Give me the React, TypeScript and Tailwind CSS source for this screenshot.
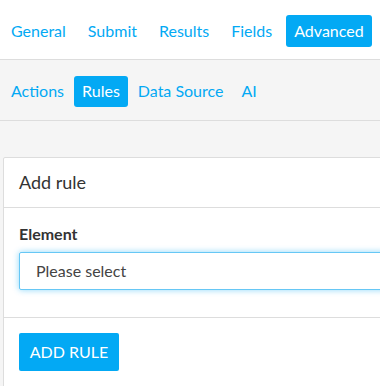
import React from "react";

export default function App() {
  const top = ["General", "Submit", "Results", "Fields", "Advanced"];
  const sub = ["Actions", "Rules", "Data Source", "AI"];
  return (
    <div
      className="w-[380px] h-[386px] overflow-hidden bg-[#f5f5f5]"
      style={{ fontFamily: "Lato, 'Noto Sans', sans-serif" }}
    >
      <div className="h-[60px] bg-white border-b border-[#dddddd] pl-[3px] pt-[15px] flex gap-[6px]">
        {top.map((t) => (
          <div
            key={t}
            className={
              "px-2 h-[32px] leading-[31px] rounded-[3px] text-[16px] whitespace-nowrap " +
              (t === "Advanced" ? "bg-[#03a9f4] text-white" : "text-[#03a9f4]")
            }
          >
            {t}
          </div>
        ))}
      </div>
      <div className="h-[61px] border-b border-[#dddddd] pl-[3px] pt-[16px] flex gap-[2px]">
        {sub.map((t) => (
          <div
            key={t}
            className={
              "px-2 h-[31px] leading-[30px] rounded-[3px] text-[16px] whitespace-nowrap " +
              (t === "Rules" ? "bg-[#03a9f4] text-white" : "text-[#03a9f4]")
            }
          >
            {t}
          </div>
        ))}
      </div>
      <div className="mt-[36px] ml-[3px] w-[400px] bg-white border border-[#dddddd] rounded-[2px]">
        <div className="h-[50px] border-b border-[#dddddd] px-[15px] flex items-center text-[18px] text-[#333333]">
          Add rule
        </div>
        <div className="px-[15px] pt-[15px] pb-[27px] border-b border-[#dddddd]">
          <div className="text-[16px] leading-[22px] font-bold text-[#333333]">Element</div>
          <div className="mt-[7px] h-[38px] border border-[#66c7f5] rounded-[2px] shadow-[0_0_6px_rgba(3,169,244,0.45)] flex items-center pl-[16px] text-[16px] text-[#444444]">
            Please select
          </div>
        </div>
        <div className="px-[15px] pt-[15px] pb-[20px]">
          <div className="w-[100px] h-[38px] bg-[#03a9f4] rounded-[2px] text-white text-[16px] flex items-center justify-center">
            ADD RULE
          </div>
        </div>
      </div>
    </div>
  );
}
